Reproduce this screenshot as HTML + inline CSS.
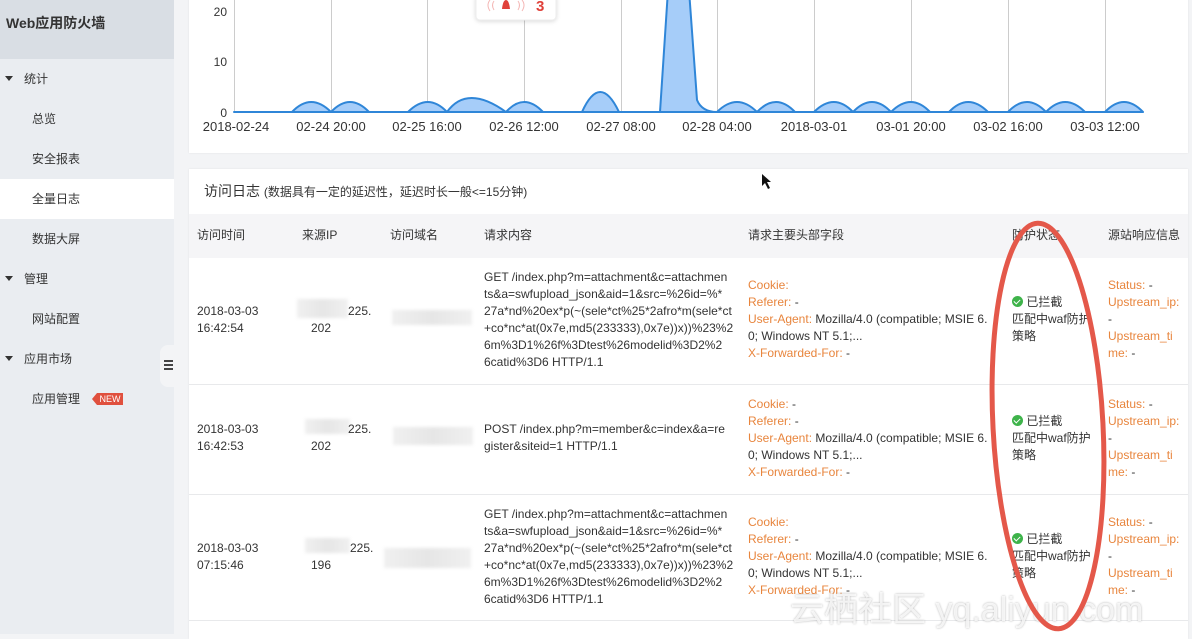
<!DOCTYPE html>
<html><head><meta charset="utf-8"><style>
*{margin:0;padding:0;box-sizing:border-box}
body{width:1192px;height:634px;overflow:hidden;background:#f3f4f6;font-family:"Liberation Sans","Noto Sans CJK SC",sans-serif;font-size:12px;color:#333;position:relative}
.side{position:absolute;left:0;top:0;width:174px;height:634px;background:#eaedf1}
.brand{height:59px;background:#d9dee4;font-size:14px;font-weight:bold;color:#333;padding:13px 0 0 6px}
.si{position:absolute;font-size:12px;color:#333}
.tri{position:absolute;left:5px;width:0;height:0;border-left:4px solid transparent;border-right:4px solid transparent;border-top:5px solid #333}
.card{position:absolute;background:#fff;box-shadow:0 0 2px rgba(0,0,0,.08)}
.t{position:absolute;line-height:17px;font-size:12px;color:#333}
.o{color:#e8853d}
.blur{position:absolute;background:linear-gradient(90deg,#f0f0f0,#e6e6e6,#f0f0f0);filter:blur(1.5px)}
.hl{position:absolute;left:189px;width:999px;height:1px;background:#e8e9eb}
.ck{display:inline-block;width:11px;height:11px;border-radius:50%;background:#3eb34a;vertical-align:-1px;position:relative}
.ck:after{content:"";position:absolute;left:3px;top:2px;width:3px;height:5px;border:solid #fff;border-width:0 1.5px 1.5px 0;transform:rotate(45deg)}
</style></head><body>
<div class="side">
<div class="brand">Web应用防火墙</div>
<div class="tri" style="top:76px"></div><div class="si" style="left:24px;top:70px">统计</div>
<div class="si" style="left:32px;top:110px">总览</div>
<div class="si" style="left:32px;top:150px">安全报表</div>
<div style="position:absolute;left:0;top:179px;width:174px;height:40px;background:#fff"></div>
<div class="si" style="left:32px;top:190px">全量日志</div>
<div class="si" style="left:32px;top:230px">数据大屏</div>
<div class="tri" style="top:276px"></div><div class="si" style="left:24px;top:270px">管理</div>
<div class="si" style="left:32px;top:310px">网站配置</div>
<div class="tri" style="top:356px"></div><div class="si" style="left:24px;top:350px">应用市场</div>
<div class="si" style="left:32px;top:390px">应用管理</div>
<div style="position:absolute;left:92px;top:393px;width:0;height:0;border-top:6px solid transparent;border-bottom:6px solid transparent;border-right:5px solid #e0503e"></div>
<div style="position:absolute;left:97px;top:393px;width:26px;height:12px;background:#e0503e;color:#fff;font-size:9px;line-height:12px;text-align:center">NEW</div>
</div>
<div style="position:absolute;left:160px;top:345px;width:16px;height:42px;background:#f3f4f6;border-radius:8px 0 0 8px"></div>
<div style="position:absolute;left:164px;top:360px;width:9px;height:2px;background:#444;box-shadow:0 4px 0 #444,0 8px 0 #444"></div>

<div class="card" style="left:189px;top:-2px;width:999px;height:155px"></div>
<svg style="position:absolute;left:0;top:0" width="1192" height="160">
<g stroke="#ccc" stroke-width="1">
<line x1="234.5" y1="0" x2="234.5" y2="112"/><line x1="331.5" y1="0" x2="331.5" y2="112"/><line x1="427.5" y1="0" x2="427.5" y2="112"/><line x1="524.5" y1="0" x2="524.5" y2="112"/><line x1="621.5" y1="0" x2="621.5" y2="112"/><line x1="717.5" y1="0" x2="717.5" y2="112"/><line x1="814.5" y1="0" x2="814.5" y2="112"/><line x1="911.5" y1="0" x2="911.5" y2="112"/><line x1="1008.5" y1="0" x2="1008.5" y2="112"/><line x1="1105.5" y1="0" x2="1105.5" y2="112"/>
</g>
<path d="M234 112 L292 112 Q311 92 331 112 Q350 92 369 112 L408 112 Q428 92 447 112 Q467 84 506 112 Q524 92 543 112 L582 112 Q600 72 619 112 L660 112 L668 -10 L689 -10 L697 100 Q702 112 717 112 Q737 92 757 112 Q776 92 795 112 L814 112 Q834 92 853 112 Q872 92 891 112 Q911 92 930 112 L949 112 Q968 92 988 112 L1008 112 Q1027 92 1046 112 Q1065 92 1085 112 L1105 112 Q1124 92 1143 112 Z" fill="#a6cdf9" stroke="#2f86d8" stroke-width="2" stroke-linejoin="round"/>
<g font-family="Liberation Sans" font-size="12" fill="#333" text-anchor="end">
<text x="227" y="16">20</text><text x="227" y="66">10</text><text x="227" y="117">0</text></g>
<g font-family="Liberation Sans" font-size="13" fill="#333" text-anchor="middle">
<text x="236" y="131">2018-02-24</text><text x="331" y="131">02-24 20:00</text><text x="427" y="131">02-25 16:00</text><text x="524" y="131">02-26 12:00</text><text x="621" y="131">02-27 08:00</text><text x="717" y="131">02-28 04:00</text><text x="814" y="131">2018-03-01</text><text x="911" y="131">03-01 20:00</text><text x="1008" y="131">03-02 16:00</text><text x="1105" y="131">03-03 12:00</text></g>
<rect x="476" y="-6" width="80" height="26" rx="4" fill="#fff" stroke="#eee" style="filter:drop-shadow(0 1px 2px rgba(0,0,0,.15))"/>
<g fill="none" stroke="#f4b7b5" stroke-width="1"><path d="M490 0 Q486 5 490 11"/><path d="M494 1 Q491 5 494 10"/><path d="M522 0 Q526 5 522 11"/><path d="M518 1 Q521 5 518 10"/></g>
<path d="M502 9 Q503 0 506 0 Q509 0 510 9 Z" fill="#e0413a"/>
<text x="536" y="11" font-family="Liberation Sans" font-size="15" font-weight="bold" fill="#e0413a">3</text>
</svg>

<div class="card" style="left:189px;top:169px;width:999px;height:470px"></div>
<div class="t" style="left:204px;top:183px;font-size:14px;color:#333">访问日志 <span style="font-size:12px">(数据具有一定的延迟性，延迟时长一般&lt;=15分钟)</span></div>
<div style="position:absolute;left:189px;top:214px;width:999px;height:44px;background:#f5f5f7"></div>
<div class="t" style="left:197px;top:227px">访问时间</div><div class="t" style="left:302px;top:227px">来源IP</div><div class="t" style="left:390px;top:227px">访问域名</div><div class="t" style="left:484px;top:227px">请求内容</div><div class="t" style="left:748px;top:227px">请求主要头部字段</div><div class="t" style="left:1012px;top:227px">防护状态</div><div class="t" style="left:1108px;top:227px">源站响应信息</div>
<div class="hl" style="top:384px"></div><div class="hl" style="top:494px"></div><div class="hl" style="top:620px"></div>

<!-- row1 -->
<div class="t" style="left:197px;top:303px">2018-03-03<br>16:42:54</div>
<div class="blur" style="left:297px;top:299px;width:51px;height:19px"></div>
<div class="t" style="left:348px;top:303px">225.</div><div class="t" style="left:311px;top:320px">202</div>
<div class="blur" style="left:392px;top:310px;width:80px;height:15px"></div>
<div class="t" style="left:484px;top:269px;width:262px">GET /index.php?m=attachment&amp;c=attachmen<br>ts&amp;a=swfupload_json&amp;aid=1&amp;src=%26id=%*<br>27a*nd%20ex*p(~(sele*ct%25*2afro*m(sele*ct<br>+co*nc*at(0x7e,md5(233333),0x7e))x))%23%2<br>6m%3D1%26f%3Dtest%26modelid%3D2%2<br>6catid%3D6 HTTP/1.1</div>
<div class="t" style="left:748px;top:277px"><span class="o">Cookie:</span><br><span class="o">Referer:</span> -<br><span class="o">User-Agent:</span> Mozilla/4.0 (compatible; MSIE 6.<br>0; Windows NT 5.1;...<br><span class="o">X-Forwarded-For:</span> -</div>
<div class="t" style="left:1012px;top:294px"><span class="ck"></span> 已拦截<br>匹配中waf防护<br>策略</div>
<div class="t" style="left:1108px;top:277px"><span class="o">Status:</span> -<br><span class="o">Upstream_ip:</span><br>-<br><span class="o">Upstream_ti</span><br><span class="o">me:</span> -</div>

<!-- row2 -->
<div class="t" style="left:197px;top:421px">2018-03-03<br>16:42:53</div>
<div class="blur" style="left:305px;top:419px;width:45px;height:15px"></div>
<div class="t" style="left:348px;top:421px">225.</div><div class="t" style="left:311px;top:438px">202</div>
<div class="blur" style="left:393px;top:427px;width:80px;height:18px"></div>
<div class="t" style="left:484px;top:421px;width:262px">POST /index.php?m=member&amp;c=index&amp;a=re<br>gister&amp;siteid=1 HTTP/1.1</div>
<div class="t" style="left:748px;top:396px"><span class="o">Cookie:</span> -<br><span class="o">Referer:</span> -<br><span class="o">User-Agent:</span> Mozilla/4.0 (compatible; MSIE 6.<br>0; Windows NT 5.1;...<br><span class="o">X-Forwarded-For:</span> -</div>
<div class="t" style="left:1012px;top:413px"><span class="ck"></span> 已拦截<br>匹配中waf防护<br>策略</div>
<div class="t" style="left:1108px;top:396px"><span class="o">Status:</span> -<br><span class="o">Upstream_ip:</span><br>-<br><span class="o">Upstream_ti</span><br><span class="o">me:</span> -</div>

<!-- row3 -->
<div class="t" style="left:197px;top:540px">2018-03-03<br>07:15:46</div>
<div class="blur" style="left:305px;top:538px;width:45px;height:15px"></div>
<div class="t" style="left:350px;top:540px">225.</div><div class="t" style="left:311px;top:557px">196</div>
<div class="blur" style="left:384px;top:548px;width:87px;height:20px"></div>
<div class="t" style="left:484px;top:506px;width:262px">GET /index.php?m=attachment&amp;c=attachmen<br>ts&amp;a=swfupload_json&amp;aid=1&amp;src=%26id=%*<br>27a*nd%20ex*p(~(sele*ct%25*2afro*m(sele*ct<br>+co*nc*at(0x7e,md5(233333),0x7e))x))%23%2<br>6m%3D1%26f%3Dtest%26modelid%3D2%2<br>6catid%3D6 HTTP/1.1</div>
<div class="t" style="left:748px;top:514px"><span class="o">Cookie:</span><br><span class="o">Referer:</span> -<br><span class="o">User-Agent:</span> Mozilla/4.0 (compatible; MSIE 6.<br>0; Windows NT 5.1;...<br><span class="o">X-Forwarded-For:</span> -</div>
<div class="t" style="left:1012px;top:531px"><span class="ck"></span> 已拦截<br>匹配中waf防护<br>策略</div>
<div class="t" style="left:1108px;top:514px"><span class="o">Status:</span> -<br><span class="o">Upstream_ip:</span><br>-<br><span class="o">Upstream_ti</span><br><span class="o">me:</span> -</div>

<div style="position:absolute;left:790px;top:582px;font-size:34px;color:rgba(255,255,255,.8);text-shadow:0 0 2px rgba(0,0,0,.3);white-space:nowrap">云栖社区 yq.aliyun.com</div>
<svg style="position:absolute;left:0;top:0" width="1192" height="634">
<ellipse cx="1048" cy="426" rx="55" ry="203" fill="none" stroke="#e4584a" stroke-width="5" transform="rotate(-3 1048 426)"/>
<path d="M762 174 L762 186 L765 183 L768 189 L770 188 L767 182 L771 182 Z" fill="#111"/>
</svg>
</body></html>
